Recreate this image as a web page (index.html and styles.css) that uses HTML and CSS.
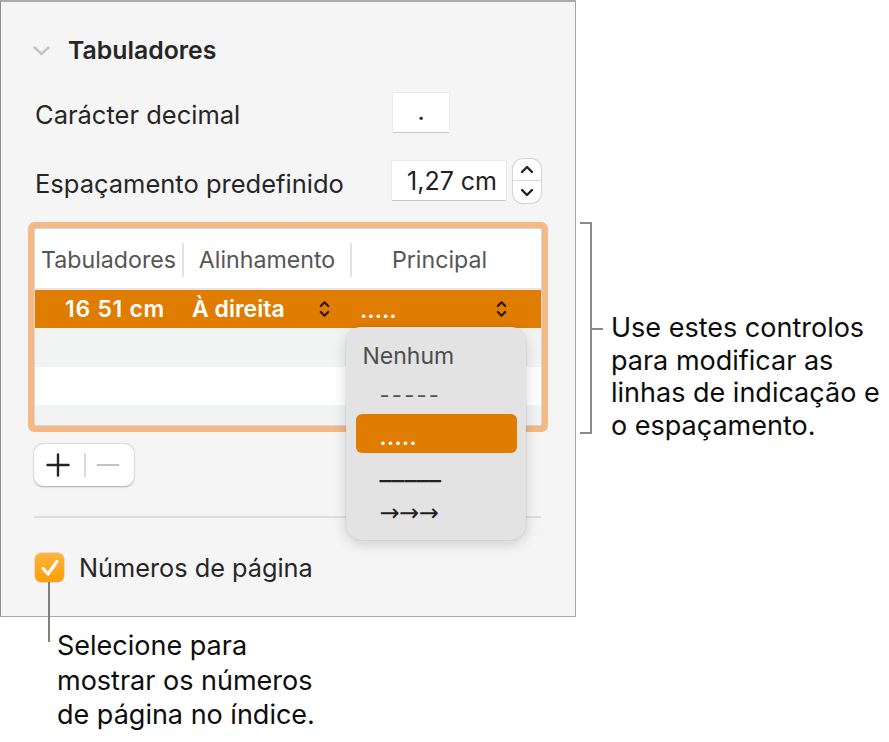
FILE: index.html
```html
<!DOCTYPE html>
<html lang="pt">
<head>
<meta charset="utf-8">
<title>Tabuladores</title>
<link rel="stylesheet" href="styles.css">
</head>
<body>
<div class="stage">
  <div class="top">
    <section class="panel">
      <div class="sec-head">
        <svg class="disclosure" width="17" height="10" viewBox="0 0 17 10"><polyline points="1.5,1.5 8.5,8 15.5,1.5" fill="none" stroke="#c4c4c4" stroke-width="2.4" stroke-linecap="round" stroke-linejoin="round"/></svg>
        <h2 class="sec-title">Tabuladores</h2>
      </div>

      <div class="field-row row-decimal">
        <span class="label">Carácter decimal</span>
        <span class="field field-small">.</span>
      </div>

      <div class="field-row row-spacing">
        <span class="label">Espaçamento predefinido</span>
        <span class="field field-wide">1,27 cm</span>
        <span class="stepper">
          <svg width="14" height="9" viewBox="0 0 14 9"><polyline points="2,7 7,2 12,7" fill="none" stroke="#222" stroke-width="2.4" stroke-linecap="round" stroke-linejoin="round"/></svg>
          <span class="stepper-div"></span>
          <svg width="14" height="9" viewBox="0 0 14 9"><polyline points="2,2 7,7 12,2" fill="none" stroke="#222" stroke-width="2.4" stroke-linecap="round" stroke-linejoin="round"/></svg>
        </span>
      </div>

      <div class="tabs-table">
        <div class="t-head">
          <div class="th c1">Tabuladores</div>
          <div class="th-sep"></div>
          <div class="th c2">Alinhamento</div>
          <div class="th-sep"></div>
          <div class="th c3">Principal</div>
        </div>
        <div class="t-row selected">
          <div class="td c1 num">16 51 cm</div>
          <div class="td c2"><span class="td-text">À direita</span>
            <svg class="updown" width="11" height="18" viewBox="0 0 11 18"><polyline points="1.8,6 5.5,2.3 9.2,6" fill="none" stroke="#2b1a05" stroke-width="2.2" stroke-linecap="round" stroke-linejoin="round"/><polyline points="1.8,12 5.5,15.7 9.2,12" fill="none" stroke="#2b1a05" stroke-width="2.2" stroke-linecap="round" stroke-linejoin="round"/></svg>
          </div>
          <div class="td c3"><span class="td-text dots">.....</span>
            <svg class="updown" width="11" height="18" viewBox="0 0 11 18"><polyline points="1.8,6 5.5,2.3 9.2,6" fill="none" stroke="#2b1a05" stroke-width="2.2" stroke-linecap="round" stroke-linejoin="round"/><polyline points="1.8,12 5.5,15.7 9.2,12" fill="none" stroke="#2b1a05" stroke-width="2.2" stroke-linecap="round" stroke-linejoin="round"/></svg>
          </div>
        </div>
        <div class="t-row alt"></div>
        <div class="t-row"></div>
        <div class="t-row alt"></div>
      </div>

      <div class="addremove">
        <svg class="plus" width="24" height="24" viewBox="0 0 24 24"><path d="M12 1.5v21M1.5 12h21" stroke="#222" stroke-width="2.4" stroke-linecap="round"/></svg>
        <span class="ar-sep"></span>
        <svg class="minus" width="24" height="24" viewBox="0 0 24 24"><path d="M1.5 12h21" stroke="#c2c2c2" stroke-width="2" stroke-linecap="round"/></svg>
      </div>

      <div class="divider"></div>

      <label class="check-row">
        <span class="check">
          <svg width="22" height="20" viewBox="0 0 22 20"><polyline points="4,10.5 9,16 18,3.5" fill="none" stroke="#fff" stroke-width="3.2" stroke-linecap="round" stroke-linejoin="round"/></svg>
        </span>
        <span class="check-label">Números de página</span>
      </label>

      <div class="popup">
        <div class="pm-item pm-head">Nenhum</div>
        <div class="pm-item pm-dash">-----</div>
        <div class="pm-item pm-sel">.....</div>
        <div class="pm-item pm-under">_____</div>
        <div class="pm-item pm-arrow">→→→</div>
      </div>
    </section>

    <aside class="note-right">
      <div class="bracket"></div>
      <div class="note-body">
        <span class="tick"></span>
        <p class="note-text">Use estes controlos<br>para modificar as<br>linhas de indicação e<br>o espaçamento.</p>
      </div>
    </aside>
  </div>

  <p class="note-bottom">Selecione para<br>mostrar os números<br>de página no índice.</p>
</div>
</body>
</html>
```

FILE: styles.css
```css
* { box-sizing: border-box; }
html, body { margin: 0; padding: 0; background: #ffffff; }
body {
  font-family: Inter, "Noto Sans", "Liberation Sans", sans-serif;
  color: #262626;
}
.stage { width: 889px; height: 742px; overflow: hidden; }
.top { display: flex; align-items: flex-start; }

.panel {
  position: relative;
  width: 576px;
  height: 617px;
  flex: none;
  background: #f5f5f5;
  border: 1px solid #a6a6a6;
  border-top: 2px solid #ababab;
  border-left: 1.5px solid #8e8e8e;
  padding: 0 34px;
}

.sec-head {
  display: flex;
  align-items: center;
  height: 40px;
  margin-top: 28px;
}
.disclosure { margin-left: -2px; margin-top: 2px; }
.sec-title {
  margin: 0 0 0 18px;
  font-size: 24.8px;
  font-weight: 600;
  color: #262626;
}

.field-row {
  display: flex;
  align-items: center;
  height: 39px;
}
.row-decimal { margin-top: 23px; }
.row-spacing { margin-top: 29px; }
.label {
  width: 357px;
  flex: none;
  font-size: 25.5px;
  color: #262626;
}
.row-decimal .label { padding-top: 3px; }
.row-spacing .label { padding-top: 5px; }
.field {
  height: 39px;
  background: #fff;
  box-shadow: 0 1px 0 #c9c9c9, 0 0 0 0.5px #e2e2e2;
  font-size: 25px;
  color: #222;
  display: flex;
  align-items: center;
}
.field-small {
  width: 56px;
  margin-left: 1px;
  justify-content: center;
  align-items: flex-end;
  padding-bottom: 6px;
}
.field-wide {
  width: 115px;
  justify-content: flex-end;
  padding-right: 9px;
}
.stepper {
  width: 28px;
  height: 44px;
  margin-left: 7px;
  background: #fff;
  border-radius: 10px;
  box-shadow: 0 0 0 1px #d6d6d6, 0 1px 1px rgba(0,0,0,0.12);
  display: flex;
  flex-direction: column;
  align-items: center;
  justify-content: space-between;
  padding: 6px 0 6px;
}
.stepper-div { width: 28px; height: 1.5px; background: #dadada; }

.tabs-table {
  margin-top: 29px;
  width: 506px;
  height: 196px;
  background: #fff;
  border-radius: 2px;
  box-shadow: 0 0 0 1px #d8d8d8, 0 0 0 7px #f3b986;
  overflow: hidden;
}
.t-head {
  display: flex;
  align-items: center;
  height: 61px;
  background: #fff;
  border-bottom: 2px solid #e6e6e6;
}
.th {
  font-size: 23.2px;
  color: #555;
  text-align: center;
  padding-top: 3px;
  white-space: nowrap;
}
.c1 { width: 147px; }
.c2 { width: 166px; }
.c3 { width: 189px; }
.th.c3 { padding-right: 14px; }
.th-sep { width: 2px; height: 34px; background: #e4e4e4; margin-top: 3px; }

.t-row { height: 38px; display: flex; align-items: center; background: #fff; }
.t-row.alt { background: #f2f3f3; height: 39px; }
.t-row.selected { background: #e07c00; }
.td {
  display: flex;
  align-items: center;
  font-size: 23px;
  font-weight: 600;
  color: #fff;
  height: 38px;
}
.td.c1 { width: 149px; justify-content: flex-end; padding-right: 19px; letter-spacing: 0.7px; }
.td.c2 { width: 168px; padding-left: 8px; justify-content: space-between; padding-right: 22px; }
.td.c3 { width: 189px; padding-left: 8px; justify-content: space-between; padding-right: 34px; }
.dots { letter-spacing: 0px; padding-top: 2px; }

.addremove {
  margin-top: 19px;
  margin-left: -1px;
  width: 100px;
  height: 42px;
  background: #fff;
  border-radius: 9px;
  box-shadow: 0 0.5px 2px rgba(0,0,0,0.28), 0 0 0 0.5px rgba(0,0,0,0.08);
  display: flex;
  align-items: center;
  padding-left: 12px;
}
.ar-sep { width: 1.5px; height: 24px; background: #dcdcdc; margin: 0 10px 0 14px; }

.divider {
  margin-top: 30px;
  margin-left: -1px;
  width: 507px;
  height: 2px;
  background: #dedede;
}

.check-row {
  display: flex;
  align-items: center;
  margin-top: 34px;
}
.check {
  position: relative;
  width: 29px;
  height: 29px;
  border-radius: 6px;
  background: linear-gradient(#ffb53d, #ff9d05);
  box-shadow: 0 0 0 0.5px rgba(180,100,0,0.35);
  display: flex;
  align-items: center;
  justify-content: center;
}
.check::after {
  content: "";
  position: absolute;
  left: 12.5px;
  top: 29px;
  width: 2px;
  height: 60px;
  background: #7f7f7f;
}
.check-label {
  margin-left: 15px;
  font-size: 25.3px;
  color: #262626;
}

.popup {
  position: absolute;
  left: 344.5px;
  top: 325px;
  width: 180px;
  height: 213px;
  background: #e3e3e3;
  border-radius: 15px;
  box-shadow: 0 4px 14px rgba(0,0,0,0.16), 0 0 0 0.5px rgba(0,0,0,0.08);
  padding: 9px 9px 9px 10px;
}
.pm-item {
  height: 39px;
  display: flex;
  align-items: center;
  padding-left: 24px;
  font-size: 22px;
  color: #333;
  border-radius: 6px;
  white-space: nowrap;
}
.pm-head { padding-left: 7px; color: #4d4d4d; font-size: 23px; }
.pm-dash { letter-spacing: 2.2px; color: #555; }
.pm-sel { background: #e07c00; color: #fff; font-weight: 600; letter-spacing: 0.5px; padding-top: 6px; }
.pm-under { color: #222; font-size: 27px; letter-spacing: 0px; padding-bottom: 4px; }
.pm-arrow { color: #222; font-family: "DejaVu Sans", sans-serif; font-size: 24px; letter-spacing: -0.5px; padding-top: 2px; }

.note-right {
  display: flex;
  align-items: flex-start;
  margin-left: 4px;
  padding-top: 222px;
}
.bracket {
  width: 12px;
  height: 212px;
  border: 2px solid #8a8a8a;
  border-left: 0;
  flex: none;
}
.note-body {
  display: flex;
  align-items: flex-start;
  margin-top: 90px;
}
.tick { width: 11px; height: 2px; background: #8a8a8a; margin-top: 16px; flex: none; }
.note-text {
  margin: 0 0 0 8px;
  font-size: 27px;
  line-height: 32.5px;
  color: #0d0d0d;
  white-space: nowrap;
}
.note-bottom {
  margin: 12px 0 0 57px;
  font-size: 27px;
  line-height: 34.5px;
  color: #0d0d0d;
  white-space: nowrap;
}
```
